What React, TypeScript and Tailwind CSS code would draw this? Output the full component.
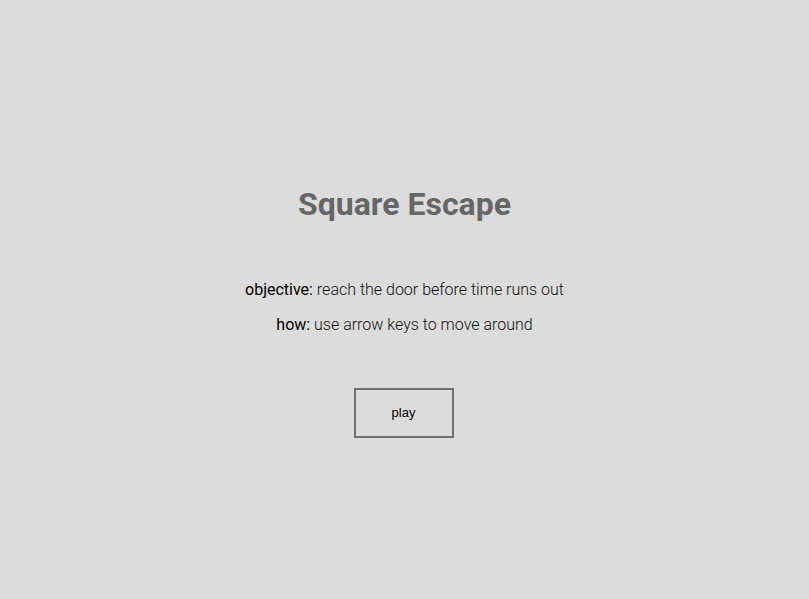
export default function App() {
  return (
    <main
      className="min-h-screen bg-[#dcdcdc] flex flex-col items-center pt-[186px]"
      style={{ fontFamily: "Roboto, 'Liberation Sans', sans-serif" }}
    >
      <h1 className="text-[32px] leading-[37px] font-bold text-[#666666]">Square Escape</h1>

      <p className="mt-[55px] text-[16px] leading-[24px] font-light text-[#111]">
        <span className="font-normal text-black">objective:</span> reach the door before time runs out
      </p>
      <p className="mt-[11px] text-[16px] leading-[24px] font-light text-[#111]">
        <span className="font-normal text-black">how:</span> use arrow keys to move around
      </p>

      <button
        className="mt-[51px] mr-[2px] w-[100px] h-[50px] border-2 border-[#707070] bg-transparent text-[13px] text-black"
        style={{ fontFamily: "'Liberation Sans', Arial, sans-serif" }}
      >
        play
      </button>
    </main>
  );
}
